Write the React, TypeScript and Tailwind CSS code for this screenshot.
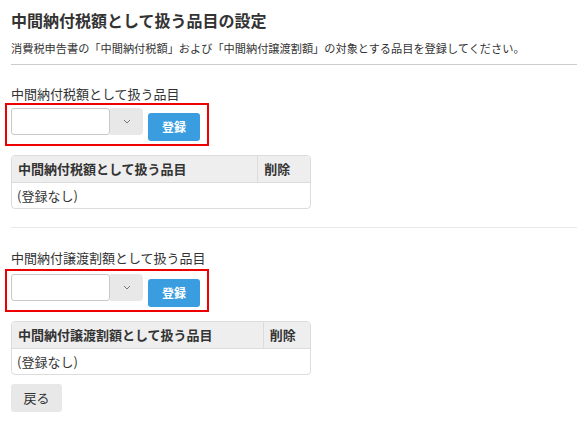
import { useState } from "react";

const font = { fontFamily: '"Noto Sans CJK JP", "Noto Sans", sans-serif' };

function ItemForm({ onAdd }: { onAdd: (v: string) => void }) {
  const [value, setValue] = useState("");
  return (
    <div className="-ml-[6px] flex w-[204px] items-start border-2 border-[#ee0000] pb-[3px] pl-[4px] pt-[3px]">
      <div className="flex h-[27px]">
        <input
          value={value}
          onChange={(e) => setValue(e.target.value)}
          className="h-full w-[99px] rounded-[3px] border border-[#c8c8c8] bg-white px-1 text-[12px] outline-none"
        />
        <div className="flex h-full w-[33px] items-center justify-center rounded-r-[4px] bg-[#e8e8e8]">
          <svg width="8" height="5" viewBox="0 0 8 5">
            <path d="M1 1 L4 4 L7 1" fill="none" stroke="#777" strokeWidth="1" />
          </svg>
        </div>
      </div>
      <button
        onClick={() => value && onAdd(value)}
        className="ml-[5px] mt-[5px] h-[28px] w-[52px] rounded-[3px] bg-[#3a9de0] text-[12px] font-bold text-white"
      >
        登録
      </button>
    </div>
  );
}

function ItemTable({ title, items }: { title: string; items: string[] }) {
  return (
    <div className="mt-[9px] w-[300px] overflow-hidden rounded-[4px] border border-[#dcdcdc]">
      <table className="w-full border-collapse text-[13px] text-[#333]">
        <thead>
          <tr className="h-[26px] bg-[#eeeeee]">
            <th className="border-b border-[#dcdcdc] px-[6px] text-left font-bold">{title}</th>
            <th className="border-b border-l border-[#dcdcdc] px-[6px] text-left font-bold">削除</th>
          </tr>
        </thead>
        <tbody>
          {items.length === 0 ? (
            <tr className="h-[26px]">
              <td colSpan={2} className="px-[5px] text-[13px]">(登録なし)</td>
            </tr>
          ) : (
            items.map((it) => (
              <tr key={it} className="h-[26px]">
                <td className="px-[6px]">{it}</td>
                <td className="border-l border-[#dcdcdc] px-[6px]">×</td>
              </tr>
            ))
          )}
        </tbody>
      </table>
    </div>
  );
}

export default function App() {
  const [taxItems, setTaxItems] = useState<string[]>([]);
  const [transferItems, setTransferItems] = useState<string[]>([]);

  return (
    <div className="min-h-screen bg-white pl-[11px] pt-[8px] text-[#333]" style={font}>
      <h1 className="text-[16px] font-bold leading-[24px]">中間納付税額として扱う品目の設定</h1>
      <p className="mt-[8px] text-[11.2px] leading-[16px]">
        消費税申告書の「中間納付税額」および「中間納付譲渡割額」の対象とする品目を登録してください。
      </p>
      <div className="mt-[8px] border-t border-[#cccccc]" />

      {/* 中間納付税額 */}
      <div className="mt-[20px] text-[13px] leading-[18px]">中間納付税額として扱う品目</div>
      <ItemForm onAdd={(v) => setTaxItems([...taxItems, v])} />
      <ItemTable title="中間納付税額として扱う品目" items={taxItems} />

      <div className="mt-[18px] border-t border-[#e8e8e8]" />

      {/* 中間納付譲渡割額 */}
      <div className="mt-[21px] text-[13px] leading-[18px]">中間納付譲渡割額として扱う品目</div>
      <div className="mt-[2px]">
        <ItemForm onAdd={(v) => setTransferItems([...transferItems, v])} />
      </div>
      <ItemTable title="中間納付譲渡割額として扱う品目" items={transferItems} />

      <button className="mt-[9px] h-[28px] w-[51px] rounded-[3px] bg-[#e8e8e8] text-[13px] text-[#333]">
        戻る
      </button>
    </div>
  );
}
